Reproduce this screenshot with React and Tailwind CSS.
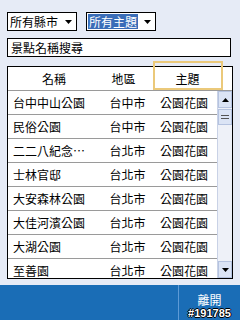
import React from 'react';

const rows = [
  ['台中中山公園', '台中市', '公園花園'],
  ['民俗公園', '台中市', '公園花園'],
  ['二二八紀念…', '台北市', '公園花園'],
  ['士林官邸', '台北市', '公園花園'],
  ['大安森林公園', '台北市', '公園花園'],
  ['大佳河濱公園', '台北市', '公園花園'],
  ['大湖公園', '台北市', '公園花園'],
  ['至善園', '台北市', '公園花園'],
];

const font = { fontFamily: '"Noto Sans CJK TC", "Noto Sans", sans-serif' };

function Arrow({ up }) {
  return (
    <svg width="7" height="4" viewBox="0 0 7 4">
      <path d={up ? 'M0 4 L3.5 0 L7 4 Z' : 'M0 0 L7 0 L3.5 4 Z'} fill="#000" />
    </svg>
  );
}

export default function App() {
  return (
    <div className="w-[240px] h-[320px] bg-[#e6ebf6] flex flex-col overflow-hidden text-[12px] text-black" style={font}>
      {/* filters */}
      <div className="flex gap-[9px] pl-[7px] pt-[12px]">
        <div className="w-[70px] h-[19px] bg-white border border-black flex items-center pl-[2px] pr-[4px]">
          <span className="flex-1 leading-none">所有縣市</span>
          <Arrow />
        </div>
        <div className="w-[70px] h-[19px] bg-white border border-black flex items-center pl-[1px] pr-[4px]">
          <span className="bg-[#3a6db8] text-white leading-[15px] px-[1px]">所有主題</span>
          <span className="flex-1" />
          <Arrow />
        </div>
      </div>

      {/* search */}
      <div className="ml-[7px] mt-[7px] w-[224px] h-[19px] bg-white border border-black flex items-center pl-[3px] leading-none">
        景點名稱搜尋
      </div>

      {/* table */}
      <div className="ml-[7px] mt-[9px] w-[226px] h-[213px] bg-white border border-black relative flex flex-col">
        <div className="h-[24px] flex items-center border-b border-[#9a9a9a] shrink-0">
          <div className="w-[92px] text-center">名稱</div>
          <div className="w-[47px] text-center">地區</div>
          <div className="flex-1 text-center pr-[4px]">主題</div>
        </div>
        <div className="absolute left-[145px] top-[-6px] w-[70px] h-[29px] border-2 border-[#ebc97a]" />
        <div className="flex flex-1 overflow-hidden">
          <div className="flex-1 overflow-hidden">
            {rows.map((r, i) => (
              <div key={i} className="h-[24px] flex items-center border-b border-[#9a9a9a] shrink-0">
                <div className="w-[96px] pl-[5px] whitespace-nowrap">{r[0]}</div>
                <div className="w-[47px] text-center">{r[1]}</div>
                <div className="flex-1 text-center">{r[2]}</div>
              </div>
            ))}
          </div>
          {/* scrollbar */}
          <div className="w-[15px] bg-[#eef1f8] border-l border-[#c9d2e6] flex flex-col">
            <div className="h-[17px] bg-[#dbe4f5] border border-[#b5c3e0] flex items-center justify-center">
              <Arrow up />
            </div>
            <div className="h-[16px] mt-[1px] bg-[#dbe4f5] border border-[#b5c3e0] flex flex-col items-center justify-center gap-[2px]">
              <div className="w-[8px] h-px bg-[#555]" />
              <div className="w-[8px] h-px bg-[#555]" />
            </div>
            <div className="flex-1" />
            <div className="h-[17px] bg-[#dbe4f5] border border-[#b5c3e0] flex items-center justify-center">
              <Arrow />
            </div>
          </div>
        </div>
      </div>

      {/* bottom bar */}
      <div className="mt-auto h-[35px] bg-[#1a6db6] flex">
        <div className="flex-1" />
        <div className="w-[62px] border-l border-[#5d9ad6] flex flex-col items-center justify-end gap-[1px] pb-[1px]">
          <span className="text-white text-[12px] leading-[12px]">離開</span>
          <span
            className="text-white text-[11px] leading-[12px] font-bold"
            style={{ fontFamily: '"Liberation Sans", sans-serif', textShadow: '1px 0 #000, -1px 0 #000, 0 1px #000, 0 -1px #000' }}
          >
            #191785
          </span>
        </div>
      </div>
    </div>
  );
}
